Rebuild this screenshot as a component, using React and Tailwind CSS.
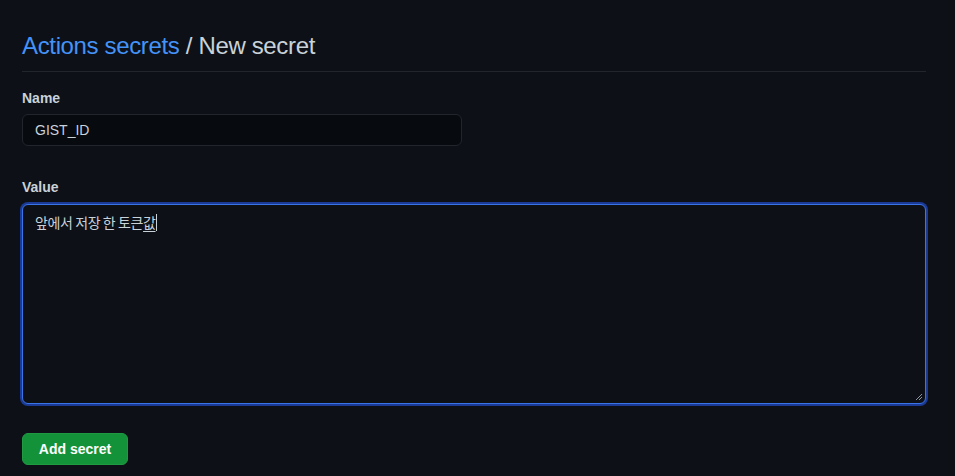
export default function App() {
  return (
    <div className="min-h-[476px] w-full bg-[#0d1117] font-['Liberation_Sans','Noto_Sans_CJK_KR',sans-serif]">
      <div className="w-[904px] ml-[22px] pt-[28px]">
        <div className="border-b border-[#21262d] pb-[7px]">
          <h1 className="text-[24px] leading-[36px] font-normal text-[#c9d1d9] tracking-[-0.35px]">
            <span className="text-[#4493f8]">Actions secrets</span> / New secret
          </h1>
        </div>
        <div className="mt-[16px]">
          <div className="text-[14px] leading-[21px] font-bold text-[#c9d1d9]">Name</div>
          <div className="mt-[5px] w-[440px] h-[32px] rounded-[6px] border border-[#21262d] bg-[#070a0f] flex items-center px-[12px] text-[14px] text-[#c9d1d9]">
            GIST_ID
          </div>
        </div>
        <div className="mt-[31px]">
          <div className="text-[14px] leading-[21px] font-bold text-[#c9d1d9]">Value</div>
          <div className="relative mt-[6px] h-[200px] rounded-[6px] border border-[#3b74e6] bg-[#0d1117] shadow-[0_0_0_2px_#1b3a95] px-[12px] pt-[7px] text-[14px] leading-[20px] tracking-[-0.4px] text-[#c9d1d9] font-['Noto_Sans_CJK_KR',sans-serif]">
            <span>앞에서 저장 한 토큰</span>
            <span className="underline decoration-[#c9d1d9] underline-offset-[3px]">값</span>
            <span className="inline-block w-px h-[17px] bg-[#c9d1d9] align-[-3px]"></span>
            <svg className="absolute right-[2px] bottom-[2px]" width="8" height="8" viewBox="0 0 8 8">
              <path d="M1 7 L7 1 M4 7 L7 4" stroke="#8b949e" strokeWidth="1" />
            </svg>
          </div>
        </div>
        <button className="mt-[29px] h-[32px] w-[106px] rounded-[6px] bg-[#14923a] border border-[#1f9a43] text-white text-[14px] font-bold flex items-center justify-center">
          Add secret
        </button>
      </div>
    </div>
  );
}
